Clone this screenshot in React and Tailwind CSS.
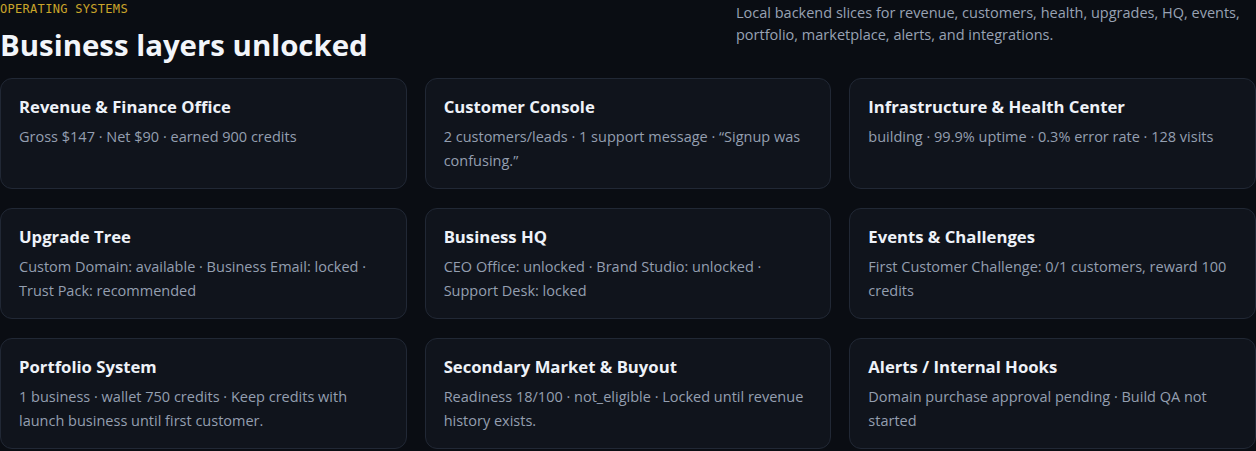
import React from "react";

const cards = [
  ["Revenue & Finance Office", "Gross $147 · Net $90 · earned 900 credits"],
  ["Customer Console", "2 customers/leads · 1 support message · “Signup was confusing.”"],
  ["Infrastructure & Health Center", "building · 99.9% uptime · 0.3% error rate · 128 visits"],
  ["Upgrade Tree", "Custom Domain: available · Business Email: locked · Trust Pack: recommended"],
  ["Business HQ", "CEO Office: unlocked · Brand Studio: unlocked · Support Desk: locked"],
  ["Events & Challenges", "First Customer Challenge: 0/1 customers, reward 100 credits"],
  ["Portfolio System", "1 business · wallet 750 credits · Keep credits with launch business until first customer."],
  ["Secondary Market & Buyout", "Readiness 18/100 · not_eligible · Locked until revenue history exists."],
  ["Alerts / Internal Hooks", "Domain purchase approval pending · Build QA not started"],
];

export default function App() {
  return (
    <div className="w-[1256px] h-[451px] overflow-hidden bg-[#0a0d13] font-['Open_Sans',sans-serif]">
      <div className="flex justify-between">
        <div>
          <div className="pt-[1px] font-['DejaVu_Sans_Mono',monospace] text-[12px] leading-[16px] tracking-[0.3px] text-[#caa52a]">
            OPERATING SYSTEMS
          </div>
          <h1 className="mt-[8px] text-[29.4px] leading-[40px] font-bold text-[#f2f5fa]">
            Business layers unlocked
          </h1>
        </div>
        <p className="w-[520px] pt-[2px] text-[14.5px] leading-[22px] text-[#98a2b3]">
          Local backend slices for revenue, customers, health, upgrades, HQ, events, portfolio, marketplace, alerts, and integrations.
        </p>
      </div>
      <div className="mt-[13px] grid grid-cols-3 gap-x-[18px] gap-y-[19px]">
        {cards.map(([t, b]) => (
          <div key={t} className="rounded-[12px] border border-[#212835] bg-[#10141c] px-[18px] pt-[16px] pb-[15px]">
            <div className="text-[16.7px] leading-[24px] font-bold text-[#eef2f8]">{t}</div>
            <div className="mt-[6px] text-[14.5px] leading-[24px] text-[#949fb0]">{b}</div>
          </div>
        ))}
      </div>
    </div>
  );
}
